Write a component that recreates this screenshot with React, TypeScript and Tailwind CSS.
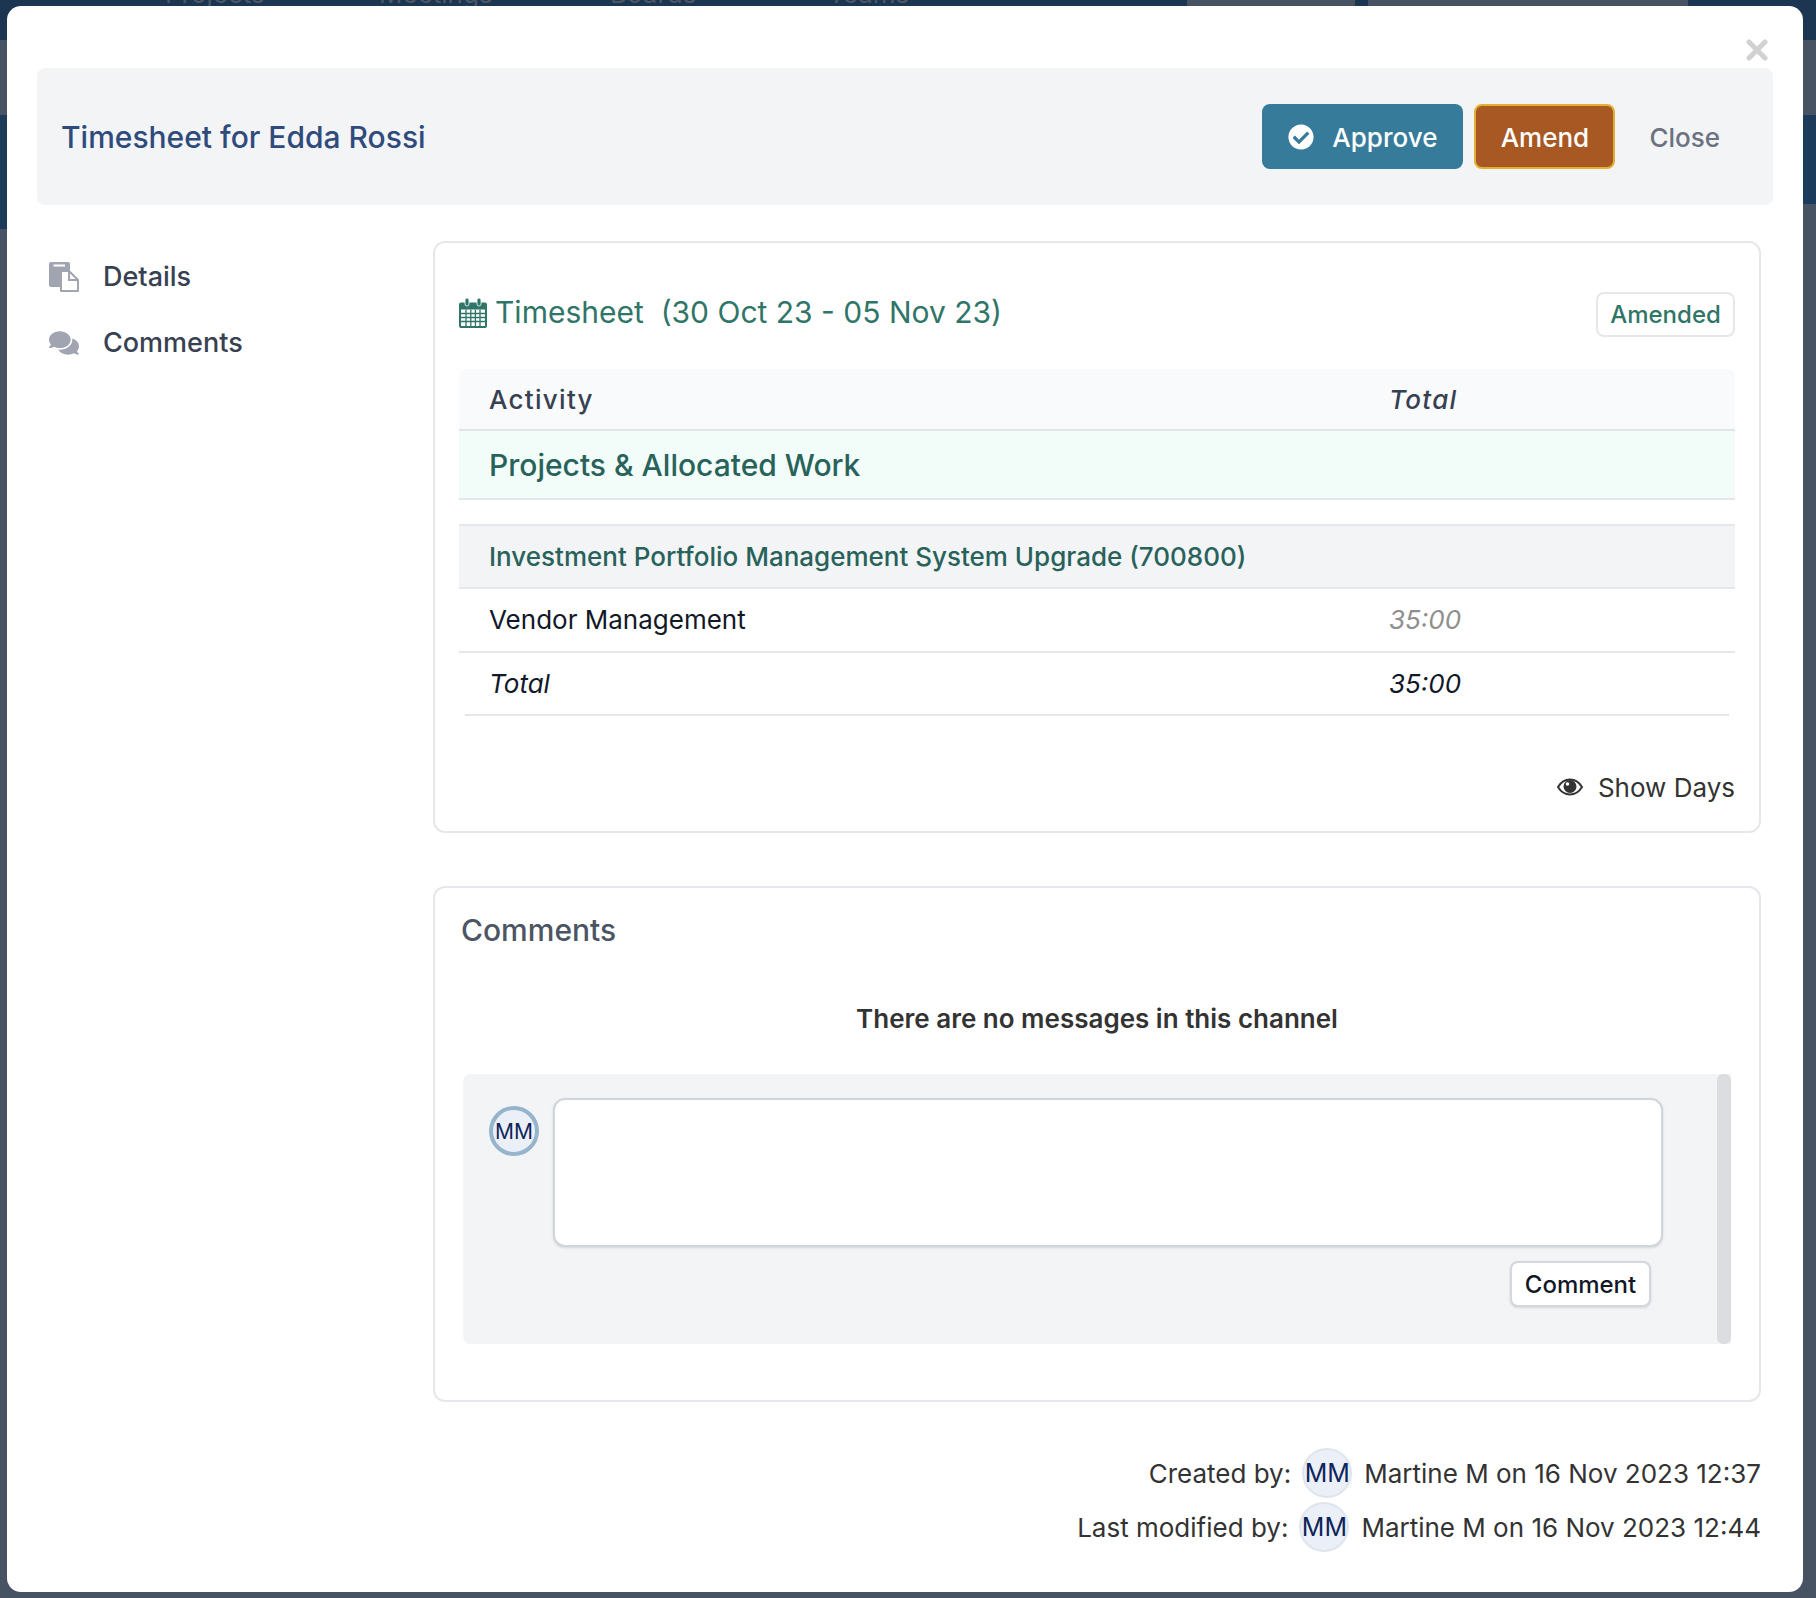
import React from "react";
import { FaCheckCircle, FaComments } from "react-icons/fa";

function CloseIcon() {
  return (
    <svg width="22" height="22" viewBox="0 0 22 22">
      <path d="M3 3l16 16M19 3L3 19" stroke="#d1d1d1" strokeWidth="5" strokeLinecap="round" />
    </svg>
  );
}

function DetailsIcon() {
  return (
    <svg width="30" height="30" viewBox="0 0 30 30" className="shrink-0">
      <rect x="0" y="0" width="21" height="25" rx="2" fill="#a1a5b2" />
      <rect x="4.500" y="2.500" width="11.500" height="2" fill="#ffffff" />
      <path d="M12 9h8l9 9v11H12z" fill="#ffffff" stroke="#a1a5b2" strokeWidth="2" strokeLinejoin="round" />
      <path d="M20 9v9h9" fill="none" stroke="#a1a5b2" strokeWidth="2" />
    </svg>
  );
}

function CalendarIcon() {
  return (
    <svg width="28" height="30" viewBox="0 0 28 30" className="shrink-0">
      <path d="M2 4.500h24a2 2 0 0 1 2 2V28a2 2 0 0 1-2 2H2a2 2 0 0 1-2-2V6.500a2 2 0 0 1 2-2z" fill="#2f7568" />
      <rect x="2" y="11.500" width="24" height="16.500" fill="#ffffff" />
      <path d="M2 15.500h24M2 19.500h24M2 23.500h24M7 11.500V28M11.800 11.500V28M16.400 11.500V28M21 11.500V28" stroke="#2f7568" strokeWidth="1.300" />
      <rect x="6" y="0" width="4" height="8" rx="2" fill="#2f7568" stroke="#ffffff" strokeWidth="0.800" />
      <rect x="18" y="0" width="4" height="8" rx="2" fill="#2f7568" stroke="#ffffff" strokeWidth="0.800" />
    </svg>
  );
}

function EyeIcon() {
  return (
    <svg width="26" height="18" viewBox="0 0 26 18" className="shrink-0">
      <path d="M1 9C4 4 8 1.500 13 1.500S22 4 25 9c-3 5-7 7.500-12 7.500S4 14 1 9z" fill="none" stroke="#333333" strokeWidth="2" />
      <circle cx="13" cy="8.500" r="6.500" fill="#333333" />
      <circle cx="10.500" cy="6" r="1.800" fill="#ffffff" />
    </svg>
  );
}

function Avatar({ ring }: { ring?: boolean }) {
  return ring ? (
    <div className="flex h-[50px] w-[50px] shrink-0 items-center justify-center rounded-full border-[4px] border-[#96b4cb] bg-[#ebf0f8] pt-[1px] text-[21px] text-[#0f2459]">
      MM
    </div>
  ) : (
    <div className="flex h-[50px] w-[50px] shrink-0 items-center justify-center rounded-full border-2 border-[#e0e5ed] bg-[#ebf0f8] pt-[1px] text-[25px] text-[#0f2459]">
      MM
    </div>
  );
}

export default function App() {
  return (
    <div className="relative h-[1598px] w-full overflow-hidden bg-[#475362] [font-family:Inter,sans-serif]">
      <div className="flex h-[40px] overflow-hidden bg-[#1c3550] text-[26px] leading-[30px] text-[#4a5868]">
        <span className="ml-[165px] -mt-[21px] w-[214px] shrink-0">Projects</span>
        <span className="-mt-[21px] w-[231px] shrink-0">Meetings</span>
        <span className="-mt-[21px] w-[218px] shrink-0">Boards</span>
        <span className="-mt-[21px] w-[359px] shrink-0">Teams</span>
        <div className="h-full w-[168px] shrink-0 bg-[#475362]" />
        <div className="ml-[13px] h-full w-[320px] shrink-0 bg-[#475362]" />
      </div>
      <div className="h-[75px] bg-[#475362]" />
      <div className="h-[89px] bg-[#1c3a59]" />
      <div className="h-[25px] w-[100px] bg-[#1c3a59]" />

      <div className="absolute left-[7px] top-[6px] flex h-[1586px] w-[1796px] flex-col rounded-[14px] bg-white pl-[30px] pr-[30px] pt-[62px]">
        <button className="absolute right-[35px] top-[33px]">
          <CloseIcon />
        </button>

        <div className="flex h-[137px] items-center justify-between rounded-lg bg-[#f3f4f6] pl-[24px] pr-[53px]">
          <h1 className="pt-[2px] text-[30px] font-medium text-[#2f4b7c]">Timesheet for Edda Rossi</h1>
          <div className="flex items-center">
            <button className="flex h-[65px] w-[201px] items-center justify-center gap-[18px] rounded-lg bg-[#377b9b] text-[26px] font-medium text-white">
              <FaCheckCircle size={26} />
              <span className="pt-[1px]">Approve</span>
            </button>
            <button className="ml-[11px] h-[65px] w-[141px] rounded-lg border-2 border-[#e3b034] bg-[#a85823] pt-[1px] text-[26px] font-medium text-white">
              Amend
            </button>
            <button className="ml-[34px] pt-[1px] text-[26px] font-medium text-[#6b7280]">Close</button>
          </div>
        </div>

        <div className="mt-[36px] flex">
          <nav className="w-[396px] shrink-0 pl-[12px]">
            <div className="mt-[16px] flex h-[40px] items-center gap-[24px] text-[27px] font-medium text-[#374151]">
              <DetailsIcon />
              Details
            </div>
            <div className="mt-[26px] flex h-[40px] items-center gap-[24px] text-[27px] font-medium text-[#374151]">
              <FaComments size={30} className="text-[#a1a5b2]" />
              Comments
            </div>
          </nav>

          <div className="w-[1328px] shrink-0">
            <section className="h-[592px] rounded-xl border-2 border-[#e5e7eb] px-[24px] pt-[49px]">
              <div className="flex h-[45px] items-center justify-between">
                <div className="flex -translate-y-[2px] items-center gap-[8px] text-[30px] text-[#2f7568]">
                  <CalendarIcon />
                  <span className="whitespace-pre">Timesheet  (30 Oct 23 - 05 Nov 23)</span>
                </div>
                <span className="flex h-[45px] w-[139px] items-center justify-center rounded-lg border-2 border-[#e5e7eb] pt-[1px] text-[24px] font-medium text-[#2f7568]">
                  Amended
                </span>
              </div>

              <div className="mt-[32px] text-[26px]">
                <div className="grid h-[62px] grid-cols-[930px_1fr] items-center rounded-t-lg border-b-2 border-[#e1e5e9] bg-[#f9fafb] font-medium tracking-[1.300px] text-[#374151]">
                  <span className="pl-[30px]">Activity</span>
                  <span className="italic">Total</span>
                </div>
                <div className="flex h-[69px] items-center border-b-2 border-[#e5e7eb] bg-[#f2fcf9] pl-[30px] pt-[2px] text-[30px] font-medium text-[#28625a]">
                  Projects &amp; Allocated Work
                </div>
                <div className="mt-[24px] flex h-[65px] items-center border-y-2 border-[#e5e7eb] bg-[#f3f4f6] pl-[30px] font-medium text-[#28625a]">
                  Investment Portfolio Management System Upgrade (700800)
                </div>
                <div className="grid h-[64px] grid-cols-[930px_1fr] items-center border-b-2 border-[#e5e7eb] pb-[1px] text-[#111827]">
                  <span className="pl-[30px]">Vendor Management</span>
                  <span className="italic text-[#8f8f8f]">35:00</span>
                </div>
                <div className="mx-[6px] grid h-[63px] grid-cols-[924px_1fr] items-center border-b-2 border-[#e5e7eb] text-[#111827]">
                  <span className="pl-[24px] italic">Total</span>
                  <span className="italic">35:00</span>
                </div>
              </div>

              <div className="mt-[51px] flex h-[40px] items-center justify-end gap-[15px] text-[26px] text-[#333333]">
                <EyeIcon />
                Show Days
              </div>
            </section>

            <section className="mt-[53px] h-[516px] rounded-xl border-2 border-[#e5e7eb] pt-[22px]">
              <h2 className="pl-[26px] text-[30px] font-medium leading-[40px] text-[#4b5563]">Comments</h2>
              <p className="mt-[49px] text-center text-[26px] font-semibold leading-[40px] text-[#333333]">
                There are no messages in this channel
              </p>
              <div className="ml-[28px] mt-[35px] flex h-[270px] w-[1268px] rounded-l-lg bg-[#f3f4f6]">
                <div className="flex flex-1 gap-[14px] pl-[26px] pr-[54px] pt-[24px]">
                  <div className="pt-[8px]">
                    <Avatar ring />
                  </div>
                  <div className="flex flex-1 flex-col items-end">
                    <textarea className="h-[149px] w-full resize-none rounded-xl border-2 border-[#d1d5db] bg-white shadow-sm" />
                    <button className="mr-[12px] mt-[14px] h-[46px] w-[141px] rounded-lg border-2 border-[#d5d7e0] bg-white pt-[1px] text-[24px] font-medium text-[#111827] shadow-sm">
                      Comment
                    </button>
                  </div>
                </div>
                <div className="w-[14px] rounded-md bg-[#dcdde0]" />
              </div>
            </section>

            <div className="mt-[46px] flex flex-col items-end gap-[4px] text-[26px] text-[#333333]">
              <div className="flex items-center gap-[11px]">
                <span>Created by:</span>
                <Avatar />
                <span className="ml-[1px]">Martine M on 16 Nov 2023 12:37</span>
              </div>
              <div className="flex items-center gap-[11px]">
                <span>Last modified by:</span>
                <Avatar />
                <span className="ml-[1px]">Martine M on 16 Nov 2023 12:44</span>
              </div>
            </div>
          </div>
        </div>
      </div>
    </div>
  );
}
